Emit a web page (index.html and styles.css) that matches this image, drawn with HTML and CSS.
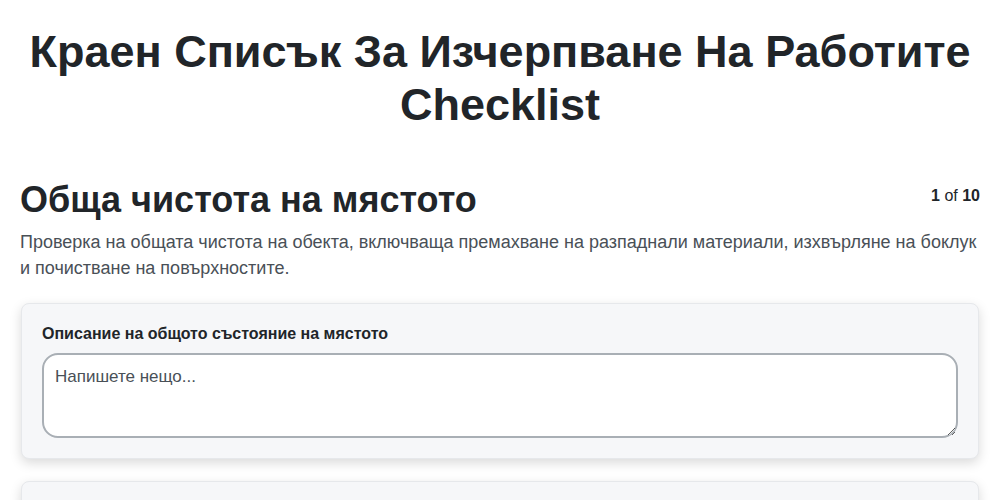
FILE: index.html
```html
<!DOCTYPE html>
<html lang="bg">
<head>
<meta charset="utf-8">
<link rel="stylesheet" href="styles.css">
</head>
<body>
<div class="page">
  <h1 class="title">Краен Списък За Изчерпване На Работите Checklist</h1>
  <div class="section-head">
    <h2 class="section-title">Обща чистота на мястото</h2>
    <div class="counter"><b>1</b> of <b>10</b></div>
  </div>
  <p class="desc">Проверка на общата чистота на обекта, включваща премахване на разпаднали материали, изхвърляне на боклук и почистване на повърхностите.</p>
  <div class="card">
    <label class="label">Описание на общото състояние на мястото</label>
    <textarea class="input" placeholder="Напишете нещо..."></textarea>
  </div>
  <div class="card"></div>
</div>
</body>
</html>
```
FILE: styles.css
```css
html, body { margin: 0; padding: 0; background: #fff; }
body { font-family: "Liberation Sans", Arial, sans-serif; color: #212529; }
.page { padding: 20px 20px; }
.title { margin: 5px 0 0; font-size: 45px; line-height: 53px; font-weight: 700; text-align: center; color: #212529; }
.section-head { display: flex; justify-content: space-between; align-items: flex-start; margin-top: 47px; }
.section-title { margin: 0; font-size: 36px; line-height: 43px; font-weight: 700; color: #212529; }
.counter { font-size: 16px; padding-top: 9px; color: #212529; }
.desc { margin: 8px 0 22px; font-size: 18px; line-height: 26px; color: #495057; }
.card { background: #f6f7f9; border: 1px solid #e6e8eb; border-radius: 8px; box-shadow: 0 4px 12px rgba(0,0,0,0.15); padding: 20px 20px 20px; margin: 0 1px 22px; display: flex; flex-direction: column; min-height: 60px; }
.label { font-size: 16px; font-weight: 700; line-height: 19px; margin-bottom: 10px; color: #212529; }
.input { display: block; box-sizing: border-box; width: 100%; height: 85px; border: 2px solid #a9afb5; border-radius: 16px; padding: 12px 11px; font-family: "Liberation Sans", Arial, sans-serif; font-size: 17px; background: #fff; color: #212529; }
.input::placeholder { color: #495057; }
```
